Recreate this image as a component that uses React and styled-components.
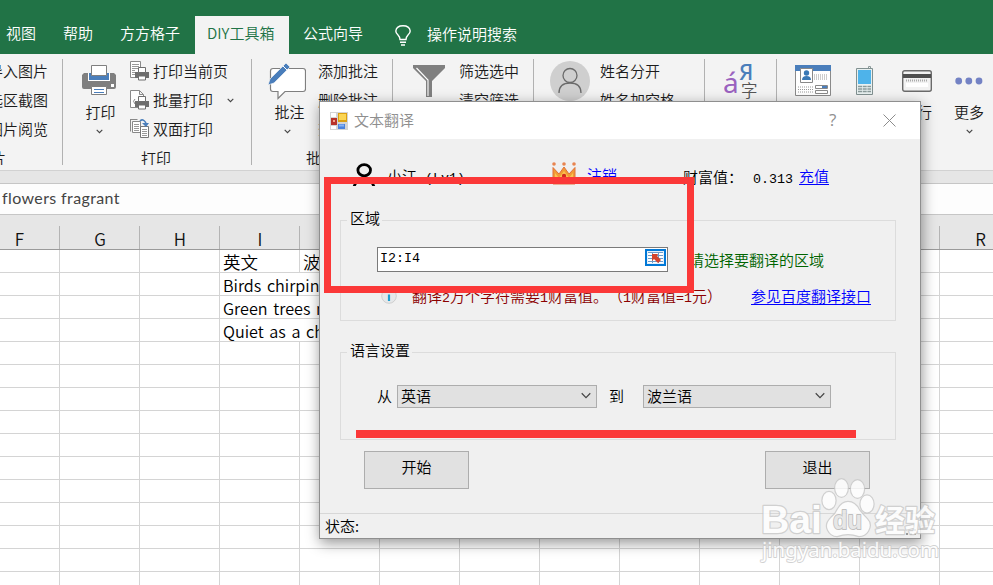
import React from 'react';
import styled, { createGlobalStyle } from 'styled-components';

const CJK = '"Noto Sans CJK SC", sans-serif';

const Global = createGlobalStyle`
  * { box-sizing: border-box; }
  body { margin: 0; overflow: hidden; }
  fieldset, legend, button { margin: 0; padding: 0; font: inherit; }
`;

const App_ = styled.div`
  position: relative;
  width: 993px;
  height: 585px;
  overflow: hidden;
  display: flex;
  flex-direction: column;
  background: #fff;
  font: 350 15px/20px ${CJK};
  text-spacing-trim: space-all;
  color: #1c1c1c;
  white-space: nowrap;
`;

/* Tab strip */
const TabStrip = styled.nav`
  height: 54px;
  flex: none;
  display: flex;
  align-items: flex-end;
  background: #217346;
  color: #fff;
`;
const Tab = styled.div`
  width: ${(p) => p.$w}px;
  height: 38px;
  padding: 7px 0 0 ${(p) => p.$pad || 0}px;
  color: ${(p) => (p.$active ? '#217346' : '#fff')};
  background: ${(p) => (p.$active ? '#f3f3f3' : 'transparent')};
  svg { display: block; }
`;
const Tell = styled.div`
  height: 38px;
  padding: 8px 0 0 14px;
`;

/* Ribbon */
const Ribbon = styled.div`
  height: 117px;
  flex: none;
  display: flex;
  padding-top: 5px;
  background: #f3f3f3;
  border-bottom: 1px solid #d2d2d2;
`;
const Group = styled.section`
  width: ${(p) => p.$w}px;
  height: 106px;
  flex: none;
  display: flex;
  flex-direction: column;
  overflow: hidden;
  border-right: ${(p) => (p.$last ? 0 : 1)}px solid #b1b1b1;
`;
const Tools = styled.div`
  height: 89px;
  flex: none;
  display: flex;
  padding-left: ${(p) => p.$pad || 0}px;
`;
const GroupName = styled.div`
  text-align: center;
  height: 20px;
  line-height: 20px;
  margin-left: ${(p) => p.$shift || 0}px;
`;
const BigTool = styled.div`
  width: ${(p) => p.$w}px;
  margin-right: ${(p) => p.$gap || 0}px;
  flex: none;
  display: flex;
  flex-direction: column;
  align-items: center;
`;
const IconSlot = styled.div`
  height: 43px;
  display: flex;
  align-items: center;
`;
const BigLabel = styled.div`
  padding-left: ${(p) => p.$nudge || 0}px;
`;
const Chev = styled.div`
  margin-top: 6px;
  height: 5px;
  line-height: 0;
`;
const SmallList = styled.div`
  display: flex;
  flex-direction: column;
  gap: 9px;
  padding-top: 2px;
  margin-left: ${(p) => p.$ml || 0}px;
`;
const SmallTool = styled.div`
  height: 20px;
  display: flex;
  align-items: center;
`;
const SmallIcon = styled.div`
  width: 23px;
  height: 20px;
  line-height: 0;
`;
const Trailing = styled.div`
  margin-left: 14px;
  line-height: 0;
`;

/* Formula bar and sheet */
const Gap = styled.div`
  height: 13px;
  flex: none;
  background: #e6e6e6;
  border-bottom: 1px solid #c6c6c6;
`;
const FormulaBar = styled.div`
  height: 31px;
  flex: none;
  padding-left: 2px;
  background: #fdfdfd;
  border-bottom: 1px solid #c6c6c6;
  font: 16px/28px Lato, sans-serif;
  letter-spacing: 0.38px;
  color: #444;
`;
const HeaderRow = styled.div`
  height: 35px;
  flex: none;
  display: grid;
  grid-template-columns: 60px repeat(11, 80px) 60px;
  align-items: end;
  background: #e6e6e6;
  border-bottom: 1px solid #9a9a9a;
`;
const HeaderCell = styled.div`
  height: 23px;
  border-right: 1px solid #b4b4b4;
  text-align: center;
  padding-right: ${(p) => p.$pr || 0}px;
  padding-left: ${(p) => p.$pl || 1}px;
  font-size: 17px;
  line-height: 25px;
  color: #111;
`;
const SheetRow = styled.div`
  height: 23px;
  flex: none;
  display: grid;
  grid-template-columns: 60px repeat(11, 80px) 60px;
  border-bottom: 1px solid #d4d4d4;
`;
const Cell = styled.div`
  height: 22px;
  min-width: 0;
  padding-left: 3px;
  border-right: 1px solid ${(p) => (p.$spill ? 'transparent' : '#d4d4d4')};
  font-size: ${(p) => (p.$latin ? 16.2 : 17.5)}px;
  word-spacing: 2px;
  line-height: 24px;
  color: #000;
`;

/* Dialog */
const Dialog = styled.div`
  position: absolute;
  left: 319px;
  top: 101px;
  width: 602px;
  height: 438px;
  display: flex;
  flex-direction: column;
  border: 1px solid #8f8f8f;
  background: #f0f0f0;
  color: #000;
  box-shadow: 1px 4px 13px rgba(0, 0, 0, 0.42);
`;
const DialogTitle = styled.header`
  height: 37px;
  flex: none;
  display: flex;
  align-items: center;
  padding: 0 24px 0 10px;
  background: #fff;
  color: #8e8e8e;
`;
const TitleText = styled.div`
  flex: 1;
  margin: -2px 0 0 6px;
`;
const HelpMark = styled.div`
  width: 54px;
  margin-top: -1px;
  font: 17px/20px "Open Sans", sans-serif;
  color: #909090;
`;
const AccountRow = styled.div`
  height: 73px;
  flex: none;
  display: flex;
  align-items: flex-start;
  padding: 23px 0 0 32px;
`;
const Item = styled.div`
  width: ${(p) => p.$w}px;
  padding-top: ${(p) => p.$t || 0}px;
  padding-left: ${(p) => p.$l || 0}px;
  flex: none;
  color: ${(p) => p.$color || '#000'};
  svg { display: block; }
`;
const Link = styled.span`
  color: #0000ff;
  text-decoration: underline;
  text-underline-offset: 2px;
  text-decoration-thickness: 1px;
`;
const Mono = styled.span`
  font: 13.33px/20px "Liberation Mono", monospace;
`;
const Box = styled.fieldset`
  width: 556px;
  height: ${(p) => p.$h}px;
  flex: none;
  margin: 0 0 ${(p) => p.$mb}px 20px;
  border: 1px solid #dcdcdc;
  min-width: 0;
`;
const Legend = styled.legend`
  height: 16px;
  margin-left: 6px;
  padding: 0 2px 0 3px;
  line-height: 11px;
`;
const Line = styled.div`
  display: flex;
  align-items: flex-start;
  padding: ${(p) => p.$t}px 0 0 ${(p) => p.$l}px;
`;
const RangeInput = styled.div`
  width: 291px;
  height: 25px;
  display: flex;
  justify-content: space-between;
  padding: 1px 1px 0 2px;
  background: #fff;
  border: 1px solid #7a7a7a;
`;
const PickButton = styled.div`
  width: 21px;
  height: 17px;
  border: 2px solid #0078d7;
  background: #e3effa;
  line-height: 0;
`;
const Select = styled.div`
  width: ${(p) => p.$w}px;
  height: 23px;
  display: flex;
  align-items: center;
  justify-content: space-between;
  padding: 0 4px 2px 3px;
  background: #e1e1e1;
  border: 1px solid #adadad;
`;
const Buttons = styled.div`
  display: flex;
  justify-content: space-between;
  padding: 0 50px 0 44px;
  height: 62px;
  flex: none;
`;
const Button = styled.button`
  width: 105px;
  height: 38px;
  padding-bottom: 6px;
  background: #e1e1e1;
  border: 1px solid #adadad;
  color: #000;
`;
const StatusBar = styled.footer`
  flex: 1;
  display: flex;
  justify-content: space-between;
  align-items: flex-end;
  padding: 0 3px 2px 5px;
  border-top: 1px solid #d7d7d7;
`;

/* Highlights over the dialog */
const RedFrame = styled.div`
  position: absolute;
  left: 324px;
  top: 177px;
  width: 370px;
  height: 116px;
  border: 7px solid #fb3838;
`;
const RedUnderline = styled.div`
  position: absolute;
  left: 356px;
  top: 430px;
  width: 500px;
  height: 8px;
  background: #fb3838;
`;
const Mark = styled.svg`
  position: absolute;
  left: 755px;
  top: 472px;
`;

const Chevron = ({ w = 7, c = '#444' }) => (
  <svg width={w} height={w / 2 + 1.5} viewBox="0 0 10 7">
    <path d="M1 1.2 5 5.2 9 1.2" fill="none" stroke={c} strokeWidth={w > 9 ? 1.1 : 1.6} />
  </svg>
);
const PrinterIcon = () => (
  <svg width="34" height="31" viewBox="0 0 34 31">
    <path d="M2 8h4v7h22V8h4l2 2v12q0 2-2 2H2q-2 0-2-2V10z" fill="#7f7f7f" />
    <path d="M6 8h22v8H6z" fill="#fff" />
    <path d="M7 8h20v7H7z" fill="#4a7ebb" />
    <path d="M9.500.5h15v10h-15zM9.500 21.500h15v8h-15z" fill="#fff" stroke="#7f7f7f" />
    <path d="M12 24.500h10M12 27.500h10" stroke="#4a7ebb" />
    <path d="M29 19h3v3h-3z" fill="#fff" />
  </svg>
);
const MiniPrinter = () => (
  <g>
    <path d="M5 11h14v6H5z" fill="#6e6e6e" />
    <path d="M8.500 6.500h7v5h-7zM8.500 15h7v4h-7z" fill="#fff" stroke="#6e6e6e" />
  </g>
);
const PageIcon = () => (
  <svg width="20" height="20">
    <path d="M.5.5h10v16H.5z" fill="#fff" stroke="#8a8a8a" />
    <path d="M2 3.500h7M2 5.500h7M2 7.500h6M2 9.500h3M2 11.500h3M2 13.500h3" stroke="#999" />
    <MiniPrinter />
  </svg>
);
const BatchIcon = () => (
  <svg width="20" height="20">
    <path d="M.5.5h9l4 4v13H.5zM9.500.5v4h4" fill="#fff" stroke="#8a8a8a" />
    <path d="M5 9q-3 2 0 5" fill="none" stroke="#888" />
    <MiniPrinter />
  </svg>
);
const DuplexIcon = () => (
  <svg width="20" height="20">
    <path d="M-.5.5h8M.5.500v12M2.500 2.500h8v11h-8z" fill="#fff" stroke="#888" />
    <path d="M4 5.500h5M4 7.500h5M4 9.500h5M4 11.500h5" stroke="#999" />
    <path d="M10.500 7.500h8v11h-8z" fill="#fff" stroke="#777" />
    <path d="M12 10.500h5M12 12.500h5M12 14.500h5M12 16.500h5" stroke="#999" />
    <path d="M10 2q3-3 6 2" fill="none" stroke="#4a7ebb" strokeWidth="1.500" />
    <path d="M12 4h7l-3 4z" fill="#4a7ebb" />
  </svg>
);
const CommentIcon = () => (
  <svg width="38" height="38" viewBox="0 0 38 38">
    <path d="M5 6.500h30q2.500 0 2.500 2.500v18q0 2.500-2.500 2.500H17l-7 7v-7H5q-2.500 0-2.500-2.500V9q0-2.500 2.500-2.500z" fill="#fff" stroke="#7f7f7f" strokeWidth="1.200" />
    <path d="M0 23 2 17 18 1 22 5 6 21z" fill="#4a7ebb" stroke="#f3f3f3" strokeWidth=".7" />
    <path d="m15 4 4 4" stroke="#fff" />
  </svg>
);
const FunnelIcon = () => (
  <svg width="32" height="32" viewBox="0 0 32 32">
    <path d="M0 0h32v3L19 16v16h-6V16L0 3z" fill="#7f7f7f" />
    <path d="M3.500 3 15 15v16" fill="none" stroke="#fff" strokeWidth="1.100" />
  </svg>
);
const AvatarIcon = () => (
  <svg width="40" height="40">
    <circle cx="20" cy="20" r="20" fill="#cfcfcf" />
    <circle cx="20" cy="14.500" r="7" fill="none" stroke="#6a6a6a" strokeWidth="1.300" />
    <path d="M9 32q0-10 11-10t11 10" fill="none" stroke="#6a6a6a" strokeWidth="1.300" />
  </svg>
);
const LangIcon = () => (
  <svg width="36" height="38">
    <text x="-1" y="31" fontSize="28" fontFamily="Noto Sans" fontWeight="400" fill="#9a62bf">á</text>
    <text x="15" y="18" fontSize="22" fontFamily="Noto Sans" fontWeight="500" fill="#4a7ebb">Я</text>
    <text x="17" y="34.500" fontSize="16.500" fill="#555">字</text>
  </svg>
);
const CardIcon = () => (
  <svg width="36" height="31">
    <path d="M.5.5h35v30H.5z" fill="#fff" stroke="#8a8a8a" />
    <path d="M0 0h36v6H0z" fill="#4a7ebb" />
    <path d="M5.500 3.500h12v14h-12z" fill="#fff" stroke="#888" />
    <circle cx="11.500" cy="8" r="2.700" fill="#3a78b5" />
    <path d="M7 15q0-4 4.500-4t4.500 4z" fill="#3a78b5" />
    <path d="M19 10h14M19 12h14M19 14h14M3 22h15M3 24.500h15M3 27h15" stroke="#999" strokeDasharray="1 1" />
    <path d="M20.500 20.500h12v3h-12zM20.500 25.500h12v3h-12z" fill="#fff" stroke="#888" />
    <path d="M27 21h5v2h-5z" fill="#4a7ebb" />
  </svg>
);
const PhoneIcon = () => (
  <svg width="18" height="29">
    <path d="M13.500 3V.5h2v2" fill="none" stroke="#8a9a9a" />
    <path d="M1.500 2.500h16v26h-16z" fill="#e8f0f0" stroke="#809090" />
    <path d="M3 4h13v14H3z" fill="#4eb3ea" />
    <path d="M3 20.500h13M3 23h13M3 25.500h13" stroke="#8a9a9a" strokeWidth="1.500" strokeDasharray="4 .7" />
  </svg>
);
const BankIcon = () => (
  <svg width="30" height="22">
    <rect x=".7" y=".7" width="28.600" height="20.600" rx="2" fill="#f2f2f2" stroke="#6a6a6a" strokeWidth="1.400" />
    <path d="M1 4h28v4H1z" fill="#4f4f4f" />
    <path d="M4 10.500h22" stroke="#aaa" strokeWidth="2" strokeDasharray="1 1" />
    <path d="M4 13h22v4H4z" fill="#fff" />
  </svg>
);
const DotsIcon = () => (
  <svg width="28" height="8" fill="#7382c4">
    <circle cx="3.700" cy="4" r="3.400" />
    <circle cx="13.800" cy="4" r="3.400" />
    <circle cx="24" cy="4" r="3.400" />
  </svg>
);
const Bulb = () => (
  <svg width="16" height="21" viewBox="0 0 16 21" fill="none" stroke="#fff" strokeWidth="1.400">
    <path d="M5 14.500Q5 12 3 10Q.8 8 .8 6Q1.500.8 8 .8T15.200 6Q15.200 8 13 10Q11 12 11 14.500zM5 17.300h6M6 20h4" />
  </svg>
);
const FormIcon = () => (
  <svg width="18" height="18">
    <path d="M0 0h18v18H0z" fill="#d4d4d4" />
    <path d="M1 1h5v4H1zM1 14h5v3H1z" fill="#fff" />
    <path d="M1 6h6v7H1z" fill="#b8332a" />
    <path d="M3 8h2v2H3z" fill="#f3a08c" />
    <path d="M8 1h9v9H8z" fill="#dba012" />
    <path d="M9 2h7v6H9z" fill="#fbd552" />
    <path d="M8 12h7v5H8z" fill="#4b83dc" />
    <path d="M9 12.500h5v2H9z" fill="#88b2f4" />
  </svg>
);
const UserIcon = () => (
  <svg width="24" height="24" fill="none" stroke="#000" strokeWidth="2.800">
    <ellipse cx="12.200" cy="8.200" rx="6.300" ry="5.600" />
    <path d="M2 25q2-8 10-9 8 1 10 9" />
  </svg>
);
const Crown = () => (
  <svg width="24" height="23">
    <path d="M1 5.500 7 12l5-7 5 7 6-6.500V22H1z" fill="#f29a35" stroke="#e0703a" />
    <path d="m3 11 4 5 5-7 5 7 4-5v4H3z" fill="#fbc550" />
    <circle cx="12" cy="14" r="2.200" fill="#d22b1e" />
    <g fill="#e88450"><circle cx="2" cy="2" r="1.800" /><circle cx="12" cy="2" r="1.800" /><circle cx="22" cy="2" r="1.800" /></g>
  </svg>
);
const InfoIcon = () => (
  <svg width="16" height="16">
    <circle cx="8" cy="8" r="7.300" fill="#e6e8ea" stroke="#cfcfcf" />
    <path d="M8 3v2M8 6.500V13" stroke="#1d9fd0" strokeWidth="2.200" />
  </svg>
);
const PickIcon = () => (
  <svg width="17" height="13">
    <path d="M1 1h15v11H1z" fill="#fff" />
    <path d="M1 1.500h15M1 4.500h15M1 7.500h15M1 10.500h15M5.500 1v11M11.500 1v11" stroke="#6d9bc8" />
    <path d="m5 3 6 0-1 2 4 4-3 3-4-4-2 2z" fill="#d2432c" />
  </svg>
);

const TABS = [
  { t: '视图', w: 56, pad: 6 },
  { t: '帮助', w: 57, pad: 7 },
  { t: '方方格子', w: 82, pad: 7 },
  { t: 'DIY工具箱', w: 94, pad: 12, on: true },
  { t: '公式向导', w: 106, pad: 14 },
];
const COLS = ['F', 'G', 'H', 'I', 'J', 'K', 'L', 'M', 'N', 'O', 'P', 'Q', 'R'];
const TEXTS = [
  ['英文', '波兰文'],
  ['Birds chirping'],
  ['Green trees make'],
  ['Quiet as a chicken'],
];

const Big = ({ icon, text, w, gap, nudge }) => (
  <BigTool $w={w} $gap={gap}>
    <IconSlot>{icon}</IconSlot>
    {text && <BigLabel $nudge={nudge}>{text}</BigLabel>}
    {text && <Chev><Chevron /></Chev>}
  </BigTool>
);
const List = ({ items, ml }) => (
  <SmallList $ml={ml}>
    {items.map((t) => <SmallTool key={t}>{t}</SmallTool>)}
  </SmallList>
);

export default function App() {
  return (
    <App_>
      <Global />
      <TabStrip>
        {TABS.map((t) => (
          <Tab key={t.t} $w={t.w} $pad={t.pad} $active={t.on}>{t.t}</Tab>
        ))}
        <Tab $w={18}><svg width="16" height="2" /><Bulb /></Tab>
        <Tell>操作说明搜索</Tell>
      </TabStrip>

      <Ribbon>
        <Group $w={63}>
          <Tools><List ml={-12} items={['导入图片', '选区截图', '图片阅览']} /></Tools>
          <GroupName $shift={-80}>图片</GroupName>
        </Group>
        <Group $w={189}>
          <Tools $pad={19}>
            <Big icon={<PrinterIcon />} text="打印" nudge={3} w={34} gap={14} />
            <SmallList>
              <SmallTool><SmallIcon><PageIcon /></SmallIcon>打印当前页</SmallTool>
              <SmallTool><SmallIcon><BatchIcon /></SmallIcon>批量打印<Trailing><Chevron /></Trailing></SmallTool>
              <SmallTool><SmallIcon><DuplexIcon /></SmallIcon>双面打印</SmallTool>
            </SmallList>
          </Tools>
          <GroupName $shift={-2}>打印</GroupName>
        </Group>
        <Group $w={141}>
          <Tools $pad={15}>
            <Big icon={<CommentIcon />} text="批注" nudge={5} w={40} gap={11} />
            <List items={['添加批注', '删除批注', '查找批注']} />
          </Tools>
          <GroupName $shift={-2}>批注</GroupName>
        </Group>
        <Group $w={141}>
          <Tools $pad={20}>
            <Big icon={<FunnelIcon />} w={32} gap={14} />
            <List items={['筛选选中', '清空筛选']} />
          </Tools>
        </Group>
        <Group $w={171}>
          <Tools $pad={16}>
            <Big icon={<AvatarIcon />} w={40} gap={10} />
            <List items={['姓名分开', '姓名加空格']} />
          </Tools>
        </Group>
        <Group $w={72}>
          <Tools $pad={19}><Big icon={<LangIcon />} w={36} /></Tools>
        </Group>
        <Group $w={216} $last>
          <Tools $pad={18}>
            <Big icon={<CardIcon />} w={36} gap={24} />
            <Big icon={<PhoneIcon />} w={18} gap={28} />
            <Big icon={<BankIcon />} w={32} gap={20} text="银行" />
            <Big icon={<DotsIcon />} w={32} text="更多" />
          </Tools>
        </Group>
      </Ribbon>

      <Gap />
      <FormulaBar>flowers fragrant</FormulaBar>
      <HeaderRow>
        {COLS.map((c, i) => (
          <HeaderCell key={c} $pr={i === 0 ? 21 : 0} $pl={i === 12 ? 22 : 1}>{c}</HeaderCell>
        ))}
      </HeaderRow>
      {Array.from({ length: 15 }, (_, r) => (
        <SheetRow key={r}>
          {COLS.map((c, i) => (
            <Cell key={c} $latin={r > 0} $spill={r > 0 && r < 4 && i === 3}>
              {TEXTS[r] && TEXTS[r][i - 3]}
            </Cell>
          ))}
        </SheetRow>
      ))}

      <Dialog>
        <DialogTitle>
          <FormIcon />
          <TitleText>文本翻译</TitleText>
          <HelpMark>?</HelpMark>
          <svg width="13" height="13" stroke="#8c8c8c" fill="none"><path d="M.5.5l12 12M12.500.5l-12 12" /></svg>
        </DialogTitle>
        <AccountRow>
          <Item $w={35}><UserIcon /></Item>
          <Item $w={165} $t={4}>小江<Mono> (Lv1)</Mono></Item>
          <Item $w={35}><Crown /></Item>
          <Item $w={96} $t={3}><Link>注销</Link></Item>
          <Item $w={70} $t={5}>财富值：</Item>
          <Item $w={46} $t={5}><Mono>0.313</Mono></Item>
          <Item $w={40} $t={4}><Link>充值</Link></Item>
        </AccountRow>
        <Box $h={109} $mb={23}>
          <Legend>区域</Legend>
          <Line $t={19} $l={36}>
            <RangeInput><Mono>I2:I4</Mono><PickButton><PickIcon /></PickButton></RangeInput>
            <Item $w={170} $t={3} $l={21} $color="#006400">请选择要翻译的区域</Item>
          </Line>
          <Line $t={14} $l={40}>
            <Item $w={31} $t={2}><InfoIcon /></Item>
            <Item $w={339} $color="#8b0000">翻译<Mono>2</Mono>万个字符需要<Mono>1</Mono>财富值。（<Mono>1</Mono>财富值<Mono>=1</Mono>元）</Item>
            <Item $w={120}><Link>参见百度翻译接口</Link></Item>
          </Line>
        </Box>
        <Box $h={96} $mb={11}>
          <Legend>语言设置</Legend>
          <Line $t={25} $l={36}>
            <Item $w={20} $t={1}>从</Item>
            <Select $w={200}>英语<Chevron w={12} /></Select>
            <Item $w={12} />
            <Item $w={34} $t={1}>到</Item>
            <Select $w={188}>波兰语<Chevron w={12} /></Select>
          </Line>
        </Box>
        <Buttons>
          <Button>开始</Button>
          <Button>退出</Button>
        </Buttons>
        <StatusBar>
          <span>状态:</span>
          <svg width="11" height="7" fill="#999"><path d="M8 0h2v2H8zM4 4h2v2H4zM8 4h2v2H8zM0 4h2v2H0z" /></svg>
        </StatusBar>
      </Dialog>

      <RedFrame />
      <RedUnderline />

      <Mark width="200" height="100" viewBox="0 0 200 100" fill="#fff" stroke="#c9c9c9" strokeWidth="2.400" strokeLinejoin="round" paintOrder="stroke" opacity=".82">
        <text x="6" y="61" fontSize="39" fontWeight="700" fontFamily="Liberation Sans" textLength="61" lengthAdjust="spacingAndGlyphs">Bai</text>
        <ellipse cx="74" cy="28.500" rx="6.500" ry="8.500" />
        <ellipse cx="86.500" cy="16" rx="6.300" ry="8.700" />
        <ellipse cx="102.500" cy="17" rx="6.500" ry="8.700" />
        <ellipse cx="112" cy="32" rx="6.500" ry="8.500" />
        <path d="M93 30q7 0 11 8 4 5 8 9 5 5 1 12-3 5-9 5-6-2-11-2t-11 2q-6 0-9-6-3-6 3-12 5-4 7-9 4-7 10-7z" />
        <text x="78" y="57" fontSize="25" fontWeight="700" fontFamily="Liberation Sans" fill="#e6e6e6" stroke="#b5b5b5" strokeWidth="1.800" textLength="29" lengthAdjust="spacingAndGlyphs">du</text>
        <text x="120" y="59" fontSize="30" fontWeight="700">经验</text>
        <text x="7" y="85" fontSize="20" fontFamily="Noto Sans" fontWeight="400" strokeWidth="1.800" textLength="177" lengthAdjust="spacingAndGlyphs">jingyan.baidu.com</text>
      </Mark>
    </App_>
  );
}
